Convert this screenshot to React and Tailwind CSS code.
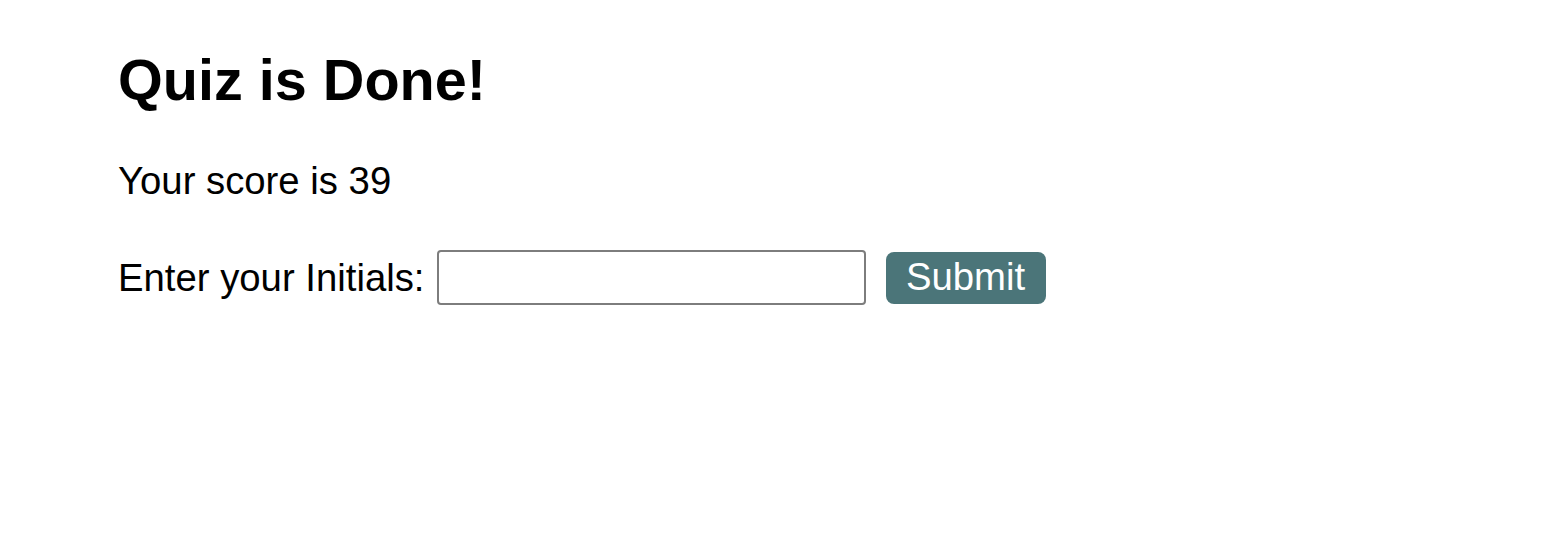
import { useState } from "react";

export default function App() {
  const [initials, setInitials] = useState("");

  return (
    <div className="min-h-[548px] bg-white text-black font-['Liberation_Sans',Arial,sans-serif]">
      <div className="pl-[118px] pt-[47px]">
        <h1 className="text-[57.6px] leading-[66px] font-bold">Quiz is Done!</h1>
        <p className="mt-[46px] text-[38.3px] leading-[44px]">Your score is 39</p>
        <div className="mt-[47px] flex items-center">
          <label className="text-[38.3px] leading-[44px]">Enter your Initials:</label>
          <input
            value={initials}
            onChange={(e) => setInitials(e.target.value)}
            className="ml-[12px] w-[429px] h-[55px] border-2 border-[#7d7d7d] rounded-[4px] bg-white px-2 text-[38px] outline-none"
          />
          <button className="ml-[20px] w-[160px] h-[52px] bg-[#4b7579] text-white text-[38.3px] leading-none rounded-[8px]">
            Submit
          </button>
        </div>
      </div>
    </div>
  );
}
